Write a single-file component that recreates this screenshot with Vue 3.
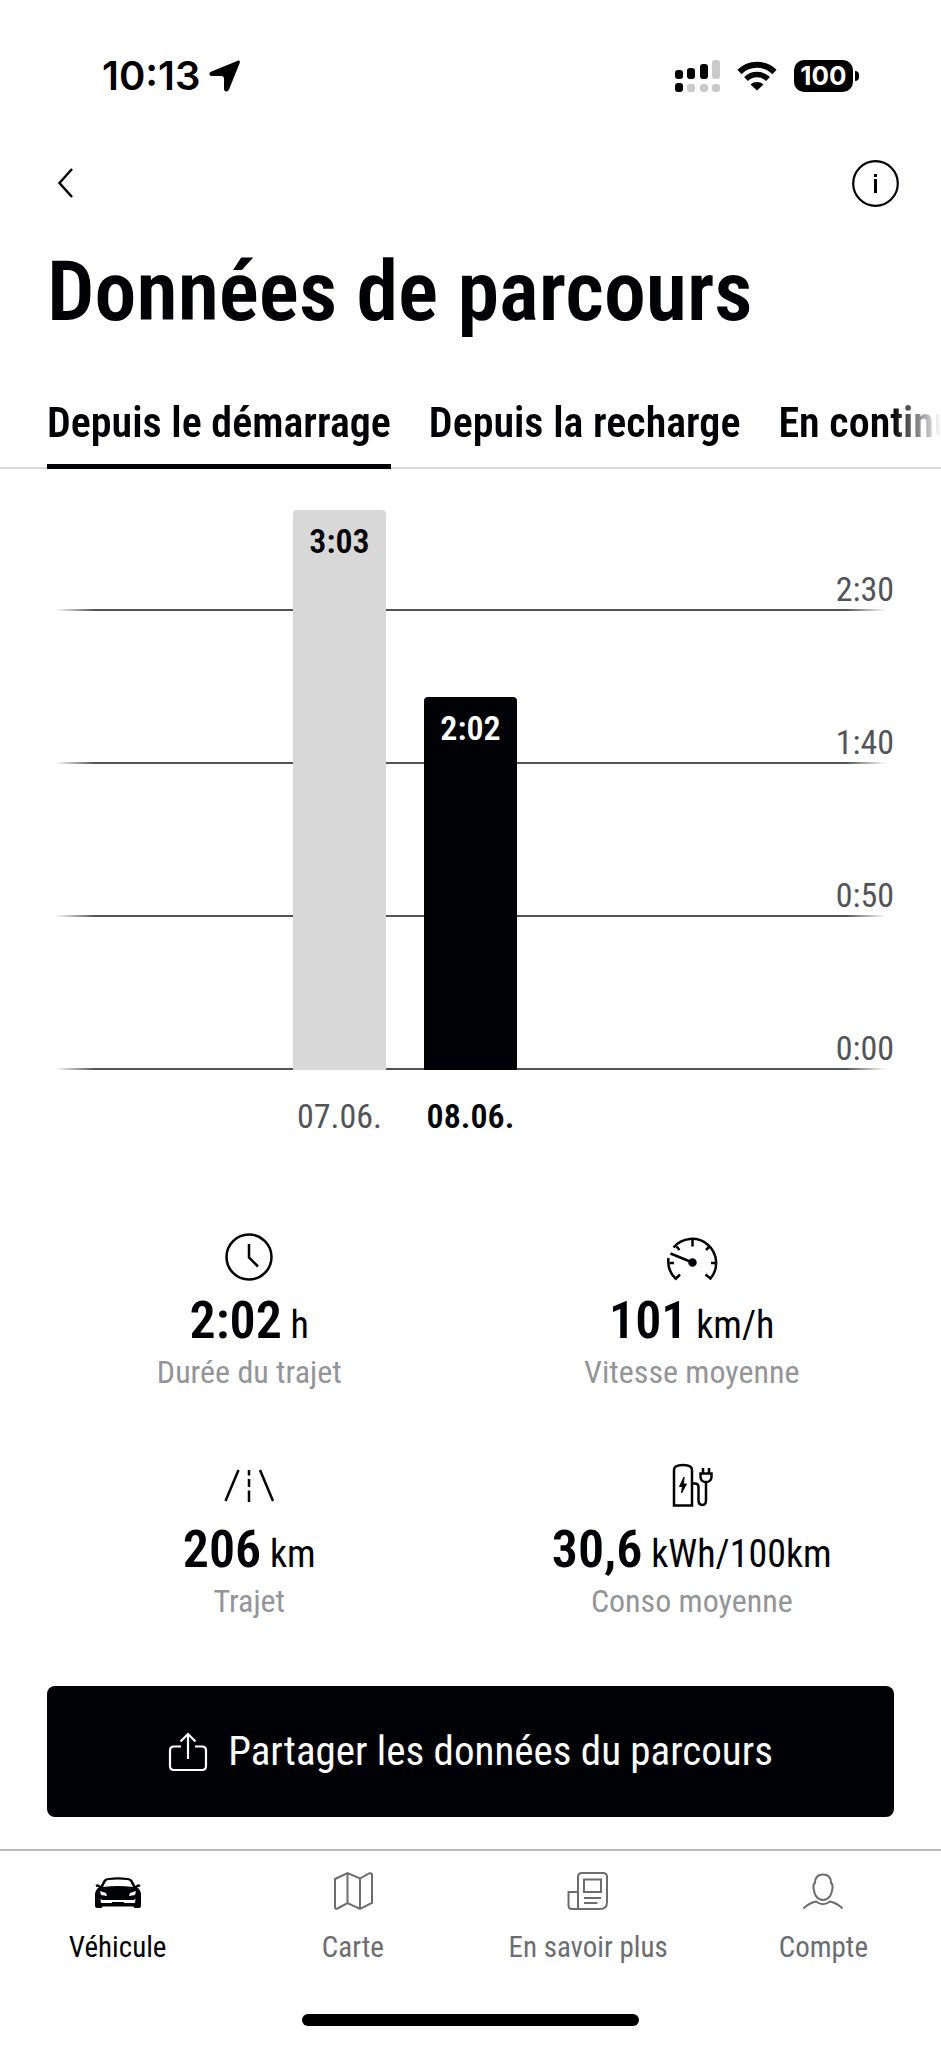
<script setup>
import { ref, computed } from 'vue'

const tabs = ['Depuis le démarrage', 'Depuis la recharge', 'En continu']
const activeTab = ref(0)

const trips = [
  { date: '07.06.', minutes: 183 },
  { date: '08.06.', minutes: 122 }
]
const selected = ref(1)

// Une graduation toutes les 50 minutes, 153px entre deux lignes
const STEP_MINUTES = 50
const STEP_HEIGHT = 153
const ticks = [150, 100, 50, 0]

const stats = [
  { icon: 'clock', value: '2:02', unit: 'h', label: 'Durée du trajet' },
  { icon: 'speed', value: '101', unit: 'km/h', label: 'Vitesse moyenne' },
  { icon: 'road', value: '206', unit: 'km', label: 'Trajet' },
  { icon: 'charge', value: '30,6', unit: 'kWh/100km', label: 'Conso moyenne' }
]

const navItems = [
  { icon: 'car', label: 'Véhicule' },
  { icon: 'map', label: 'Carte' },
  { icon: 'news', label: 'En savoir plus' },
  { icon: 'user', label: 'Compte' }
]
const activeNav = ref('car')

const bars = computed(() =>
  trips.map((trip) => ({
    ...trip,
    height: Math.round((trip.minutes / STEP_MINUTES) * STEP_HEIGHT) + 'px'
  }))
)

function formatDuration(minutes) {
  return Math.floor(minutes / 60) + ':' + String(minutes % 60).padStart(2, '0')
}
</script>

<template>
  <div class="screen">
    <div class="status-bar">
      <div class="status-left">
        <span class="time">10:13</span>
        <svg width="32" height="32" viewBox="0 0 32 32">
          <path d="M27.500 1.200 Q32 -1 30.500 3.500 L20 29.500 Q18.500 32.500 16 31 Q15 30.500 15 28.500 V18.500 Q15 16 13 16 H3 Q1 16 0.500 14.500 Q0 12.500 2.500 11.500 Z" />
        </svg>
      </div>
      <div class="status-right">
        <svg width="45" height="32" viewBox="0 0 45 32">
          <rect x="0" y="10" width="8" height="9" rx="3" />
          <rect x="12" y="8" width="8" height="11" rx="3" />
          <rect x="25" y="4" width="8" height="15" rx="3" />
          <rect x="37" y="0" width="8" height="19" rx="3" fill="#cacaca" />
          <rect x="0" y="23" width="8" height="9" rx="3" />
          <rect x="12" y="24" width="8" height="8" rx="3" fill="#cacaca" />
          <rect x="25" y="24" width="8" height="8" rx="3" fill="#cacaca" />
          <rect x="37" y="24" width="8" height="8" rx="3" fill="#cacaca" />
        </svg>
        <svg width="40" height="30" viewBox="0 0 40 30">
          <path d="M2.500 11 A25 25 0 0 1 37.500 11" fill="none" stroke="#000" stroke-width="6" />
          <path d="M9 18 A16 16 0 0 1 31 18" fill="none" stroke="#000" stroke-width="5.500" />
          <path d="M20 29.500 L13.500 23.500 A10 10 0 0 1 26.500 23.500 Z" />
        </svg>
        <div class="battery"><span class="battery-level">100</span></div>
      </div>
    </div>

    <header class="header">
      <div class="toolbar">
        <button class="icon-button" aria-label="Retour">
          <svg width="47" height="47" viewBox="0 0 47 47">
            <path d="M25 9 L12.500 23 L25 37" fill="none" stroke="#010205" stroke-width="2.500" />
          </svg>
        </button>
        <button class="icon-button info" aria-label="Informations">
          <svg width="47" height="47" viewBox="0 0 47 47">
            <circle cx="23.500" cy="23.500" r="22.300" fill="none" stroke="#010205" stroke-width="2.200" />
            <rect x="22" y="14" width="3" height="3" />
            <rect x="22" y="19" width="3" height="14" />
          </svg>
        </button>
      </div>
      <h1>Données de parcours</h1>
    </header>

    <div class="tabs">
      <div class="tab-list" role="tablist">
        <button
          v-for="(tab, index) in tabs"
          :key="tab"
          role="tab"
          class="tab"
          :class="{ active: index === activeTab }"
          :aria-selected="index === activeTab"
          @click="activeTab = index"
        >{{ tab }}</button>
      </div>
    </div>

    <section class="chart">
      <div class="gridlines">
        <div v-for="tick in ticks" :key="tick" class="gridline">{{ formatDuration(tick) }}</div>
      </div>
      <div class="bars">
        <button
          v-for="(bar, index) in bars"
          :key="bar.date"
          class="bar"
          :class="{ selected: index === selected }"
          :style="{ height: bar.height }"
          @click="selected = index"
        >{{ formatDuration(bar.minutes) }}</button>
      </div>
      <div class="dates">
        <span
          v-for="(bar, index) in bars"
          :key="bar.date"
          class="date"
          :class="{ selected: index === selected }"
        >{{ bar.date }}</span>
      </div>
    </section>

    <section class="stats">
      <div v-for="stat in stats" :key="stat.label" class="stat">
        <svg v-if="stat.icon === 'clock'" class="stat-icon" viewBox="0 0 52 52">
          <circle cx="26" cy="26" r="22.500" />
          <path d="M26 13 V26.500 L35 35.500" />
        </svg>
        <svg v-else-if="stat.icon === 'speed'" class="stat-icon" viewBox="0 0 52 52">
          <path d="M9.500 47.500 A24 24 0 0 1 2.500 27" />
          <path d="M7.500 16.500 A23.500 23.500 0 0 1 44.500 47.500 L39.500 43.500" />
          <path d="M9 48.500 L14 43.500 M3.500 32 H8 M45 32 H50 M26.500 9 V15.500 M10.500 15.500 L13.500 19 M43.500 15.500 L40 19" />
          <path d="M4.500 22.500 L26.500 31.500" />
          <circle cx="26.500" cy="31.500" r="3" class="solid" />
        </svg>
        <svg v-else-if="stat.icon === 'road'" class="stat-icon" viewBox="0 0 52 52">
          <path d="M15.500 10 L2.500 41 M37 10 L50 41" />
          <path d="M26 10 V15.500 M26 19 V27 M26 30.500 V42" />
        </svg>
        <svg v-else class="stat-icon" viewBox="0 0 52 52">
          <path d="M8 45.500 V10 Q8 5 17 5 Q26 5 26 10 V45.500 Z" />
          <path d="M18 17 L13.500 26.500 H16.500 L15.500 33 L20.500 24 H17.500 Z" class="solid bolt" />
          <path d="M26 23.500 H29 Q32.500 23.500 32.500 27.500 V40 Q32.500 45 36.500 45 Q40 45 40 40 V22" />
          <path d="M34.500 13.500 H45.500 V17 Q45 22 40 22 Q35 22 34.500 17 Z M37 13 V8 M43 13 V8" />
        </svg>
        <p class="stat-value"><strong>{{ stat.value }}</strong> {{ stat.unit }}</p>
        <p class="stat-label">{{ stat.label }}</p>
      </div>
    </section>

    <div class="share">
      <button class="share-button">
        <svg width="40" height="40" viewBox="0 0 40 40" fill="none" stroke="#fff" stroke-width="2.200">
          <path d="M13 14.500 H6 Q2 14.500 2 18.500 V34 Q2 38 6 38 H34 Q38 38 38 34 V18.500 Q38 14.500 34 14.500 H27" />
          <path d="M20 27 V2 M12.500 9.500 L20 2 L27.500 9.500" />
        </svg>
        Partager les données du parcours
      </button>
    </div>

    <nav class="bottom-nav">
      <a
        v-for="item in navItems"
        :key="item.icon"
        href="#"
        class="nav-item"
        :class="{ active: item.icon === activeNav }"
        @click.prevent="activeNav = item.icon"
      >
        <svg v-if="item.icon === 'car'" class="nav-icon" viewBox="0 0 48 40">
          <path
            fill="currentColor"
            fill-rule="evenodd"
            d="M15 7 Q24 5.500 33 7 Q37 7 38.500 9.500 L41.500 15 Q44 12 46.500 14 L45.500 16 H43 Q47 19 47 24 V35 Q47 37 45 37 H41.500 Q39.500 37 39.500 35.500 H8.500 Q8.500 37 6.500 37 H3 Q1 37 1 35 V24 Q1 19 5 16 H2.500 L1.500 14 Q4 12 6.500 15 L9.500 9.500 Q11 7 15 7 Z M14.500 9 Q12.500 9 11.500 11 L9 16 Q24 14 39 16 L36.500 11 Q35.500 9 33.500 9 Q24 8 14.500 9 Z M6 20 L7 24 L13 25 L12 22 Z M42 20 L41 24 L35 25 L36 22 Z M6.500 27.500 L7 32 H41 L41.500 27.500 L40 29 H8 Z"
          />
          <path fill="currentColor" d="M18 31 H30 V33 H18 Z" />
        </svg>
        <svg v-else-if="item.icon === 'map'" class="nav-icon line" viewBox="0 0 48 40">
          <path d="M6 8 L18.500 2 L31 7.500 L40 2.500 Q43 1.500 43 4 V32 L31 38 L18.500 32 L8.500 37.500 Q6 38.500 6 36 Z M18.500 2 V32 M31 7.500 V38" />
        </svg>
        <svg v-else-if="item.icon === 'news'" class="nav-icon line" viewBox="0 0 48 40">
          <path d="M14 38 V6 Q14 2 18 2 H39 Q43 2 43 6 V31 Q43 38 36 38 H8 Q4.500 38 4.500 34.500 V21 H14" />
          <path d="M20 8.500 H37 V21 H20 Z M20 27 H37 M20 32 H33.500" />
        </svg>
        <svg v-else class="nav-icon line" viewBox="0 0 48 40">
          <path d="M24 3.500 Q32 3.500 32 12 Q34 13 33.500 17 Q32 29 24 29 Q16 29 14.500 17 Q14 13 16 12 Q16 3.500 24 3.500 Z" />
          <path d="M4.500 37.500 Q10 32 17 30.500 Q24 36 31 30.500 Q38 32 43.500 37.500" />
        </svg>
        {{ item.label }}
      </a>
    </nav>
    <div class="home-indicator"></div>
  </div>
</template>

<style>
body {
  background: #fff;
}
</style>

<style scoped>
.screen {
  display: flex;
  flex-direction: column;
  min-height: 100vh;
  box-sizing: border-box;
  overflow: hidden;
  color: #010205;
  font-family: 'Roboto Condensed', 'Liberation Sans Narrow', Roboto, sans-serif;
}

button {
  border: none;
  background: none;
  padding: 0;
  color: inherit;
  font-family: inherit;
  cursor: pointer;
}

svg {
  display: block;
  flex-shrink: 0;
}

.status-bar {
  display: flex;
  justify-content: space-between;
  align-items: center;
  padding: 52px 82px 0 102px;
  font-family: Inter, sans-serif;
  color: #000;
}

.status-left {
  display: flex;
  align-items: center;
  gap: 9px;
}

.time {
  font-size: 40px;
  font-weight: 600;
  line-height: 48px;
}

.status-right {
  display: flex;
  align-items: center;
  gap: 17px;
}

.battery {
  display: flex;
  align-items: center;
  gap: 2px;
}

.battery-level {
  width: 59px;
  border-radius: 10px;
  background: #000;
  color: #fff;
  font-size: 26px;
  font-weight: 700;
  line-height: 32px;
  text-align: center;
}

.battery::after {
  content: '';
  width: 4px;
  height: 10px;
  border-radius: 0 4px 4px 0;
  background: #000;
}

.header {
  padding: 60px 42px 0 47px;
}

.toolbar {
  display: flex;
  justify-content: space-between;
}

.icon-button {
  width: 47px;
  height: 47px;
}

h1 {
  margin: 37px 0 0;
  font-size: 84px;
  font-weight: 600;
  line-height: 96px;
}

.tabs {
  margin-top: 58px;
  background: linear-gradient(#d8d9db, #d8d9db) bottom / 100% 2px no-repeat;
}

.tab-list {
  display: flex;
  gap: 38px;
  padding-left: 47px;
  overflow: hidden;
  mask-image: linear-gradient(to right, #000 calc(100% - 48px), transparent);
}

.tab {
  flex-shrink: 0;
  padding-bottom: 16px;
  border-bottom: 5px solid transparent;
  font-size: 42px;
  font-weight: 600;
  line-height: 50px;
  white-space: nowrap;
}

.tab.active {
  border-bottom-color: #010205;
}

.chart {
  display: grid;
  padding: 0 47px;
}

.gridlines {
  grid-area: 1 / 1;
  display: grid;
  grid-template-rows: 1fr 153px 153px 153px;
}

.gridline {
  display: flex;
  align-items: flex-end;
  justify-content: flex-end;
  padding-bottom: 3px;
  background: linear-gradient(to right, transparent 8px, #535457 48px, #535457 calc(100% - 48px), transparent calc(100% - 8px)) bottom / 100% 2px no-repeat;
  color: #535457;
  font-size: 34px;
  line-height: 38px;
}

.bars {
  grid-area: 1 / 1;
  display: flex;
  justify-content: center;
  align-items: flex-end;
  gap: 38px;
  padding: 41px 131px 0 0;
}

.bar {
  display: flex;
  justify-content: center;
  width: 93px;
  padding-top: 12px;
  border-radius: 4px 4px 0 0;
  background: #d8d8d8;
  font-size: 34px;
  font-weight: 600;
  line-height: 38px;
}

.bar.selected {
  background: #010205;
  color: #fff;
}

.dates {
  display: flex;
  justify-content: center;
  gap: 38px;
  padding: 27px 131px 0 0;
}

.date {
  width: 93px;
  color: #535457;
  font-size: 34px;
  line-height: 38px;
  text-align: center;
}

.date.selected {
  color: #010205;
  font-weight: 600;
}

.stats {
  display: grid;
  grid-template-columns: 1fr 1fr;
  row-gap: 69px;
  margin-top: 96px;
  padding: 0 28px;
}

.stat {
  display: flex;
  flex-direction: column;
  align-items: center;
}

.stat-icon {
  width: 52px;
  height: 52px;
  fill: none;
  stroke: #010205;
  stroke-width: 2.5px;
}

.solid {
  fill: #010205;
}

.bolt {
  stroke-width: 1px;
}

.stat p {
  margin: 0;
  white-space: nowrap;
}

.stat .stat-value {
  margin-top: 16px;
  font-size: 38px;
  line-height: 52px;
}

.stat-value strong {
  font-size: 52px;
  font-weight: 600;
  line-height: 40px;
}

.stat .stat-label {
  margin-top: 2px;
  color: #949598;
  font-size: 32px;
  line-height: 38px;
}

.share {
  padding: 66px 47px 32px;
}

.share-button {
  display: flex;
  justify-content: center;
  align-items: center;
  gap: 20px;
  width: 100%;
  padding: 40px 0;
  border-radius: 8px;
  background: #010205;
  color: #fff;
  font-size: 41px;
  line-height: 51px;
}

.bottom-nav {
  display: grid;
  grid-template-columns: repeat(4, 1fr);
  padding-top: 20px;
  border-top: 2px solid #b8b8b8;
}

.nav-item {
  display: flex;
  flex-direction: column;
  align-items: center;
  gap: 18px;
  color: #6b6d70;
  font-size: 29px;
  line-height: 36px;
  text-decoration: none;
}

.nav-item.active {
  color: #010205;
}

.nav-icon {
  width: 48px;
  height: 40px;
}

.nav-icon.line {
  fill: none;
  stroke: currentColor;
  stroke-width: 2px;
}

.home-indicator {
  width: 337px;
  height: 12px;
  margin: auto auto 19px;
  border-radius: 6px;
  background: #000;
}
</style>
